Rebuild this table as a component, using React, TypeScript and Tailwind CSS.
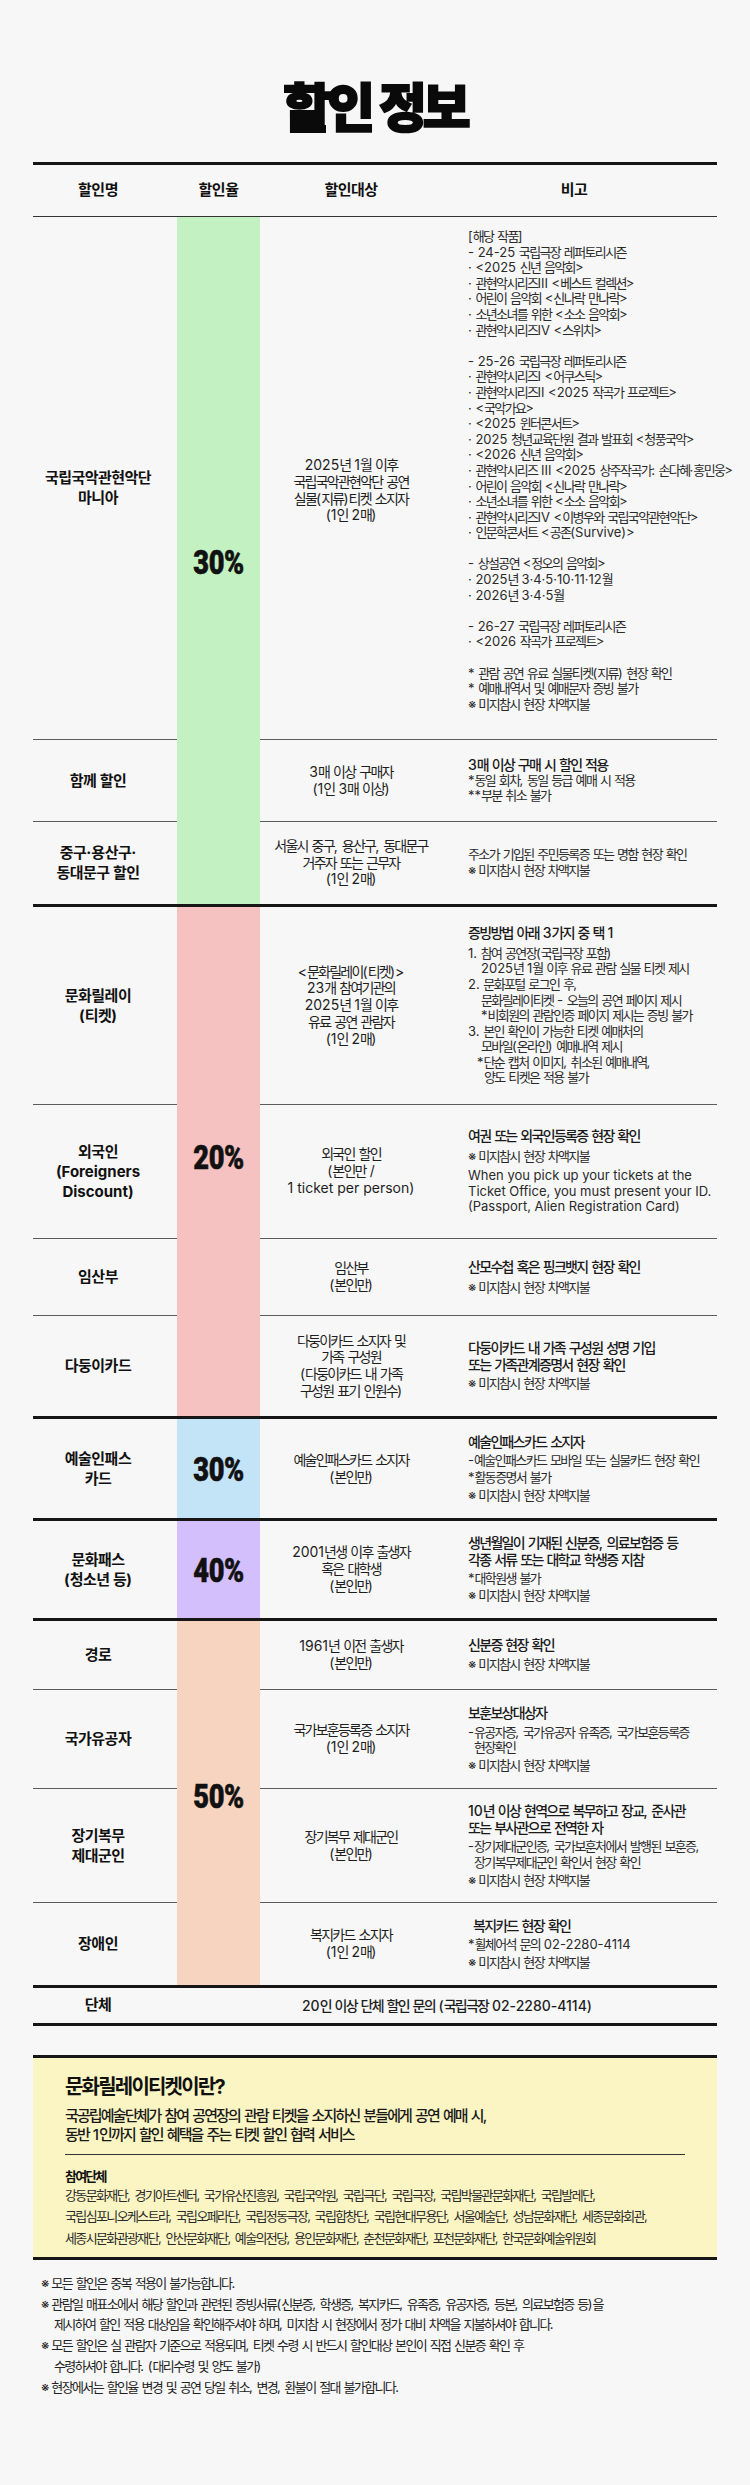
import React from "react";

const RX = /([\u1100-\u11FF\u3130-\u318F\uAC00-\uD7A3※]+)/;

function K({ s }: { s: string }) {
  const parts = s.split(RX);
  return (
    <span>
      {parts.map((p, i) =>
        p === "" ? null : i % 2 === 1 ? (
          <React.Fragment key={i}>{p}</React.Fragment>
        ) : (
          <span key={i} className="tracking-normal">
            {p}
          </span>
        )
      )}
    </span>
  );
}

type Row = {
  h: string;
  name: string[];
  nameCls?: string;
  target: string[];
  targetCls?: string;
  note: React.ReactNode;
  noteCls?: string;
};

type Group = {
  color: string;
  rate: string;
  span: string;
  rateCls?: string;
  rows: Row[];
  first?: boolean;
};

const Hd = ({ s, className = "" }: { s: string; className?: string }) => (
  <div
    className={`text-[14px] leading-[16.8px] font-medium tracking-[-0.12em] text-[#1a1a1a] whitespace-nowrap ${className}`}
  >
    <K s={s} />
  </div>
);

const Nt = ({ s, className = "" }: { s: string; className?: string }) => (
  <div className={`text-[13px] leading-[15.6px] tracking-[-0.125em] text-[#2a2a2a] whitespace-nowrap ${className}`}>
    {s === "" ? "\u00a0" : <K s={s} />}
  </div>
);

const MIJI = "※ 미지참시 현장 차액지불";

const row1Lines = [
  "[해당 작품]",
  "- 24-25 국립극장 레퍼토리시즌",
  "· <2025 신년 음악회>",
  "· 관현악시리즈III <베스트 컬렉션>",
  "· 어린이 음악회 <신나락 만나락>",
  "· 소년소녀를 위한 <소소 음악회>",
  "· 관현악시리즈IV <스위치>",
  "",
  "- 25-26 국립극장 레퍼토리시즌",
  "· 관현악시리즈I <어쿠스틱>",
  "· 관현악시리즈II <2025 작곡가 프로젝트>",
  "· <국악가요>",
  "· <2025 윈터콘서트>",
  "· 2025 청년교육단원 결과 발표회 <청풍국악>",
  "· <2026 신년 음악회>",
  "· 관현악시리즈 III <2025 상주작곡가: 손다혜·홍민웅>",
  "· 어린이 음악회 <신나락 만나락>",
  "· 소년소녀를 위한 <소소 음악회>",
  "· 관현악시리즈IV <이병우와 국립국악관현악단>",
  "· 인문학콘서트 <공존(Survive)>",
  "",
  "- 상설공연 <정오의 음악회>",
  "· 2025년 3·4·5·10·11·12월",
  "· 2026년 3·4·5월",
  "",
  "- 26-27 국립극장 레퍼토리시즌",
  "· <2026 작곡가 프로젝트>",
  "",
  "* 관람 공연 유료 실물티켓(지류) 현장 확인",
  "* 예매내역서 및 예매문자 증빙 불가",
  MIJI,
];

const groups: Group[] = [
  {
    first: true,
    color: "bg-[#c3f1c2]",
    rate: "30%",
    span: "row-span-3",
    rateCls: "pt-[3px]",
    rows: [
      {
        h: "h-[522px]",
        name: ["국립국악관현악단", "마니아"],
        nameCls: "pt-[20px]",
        target: ["2025년 1월 이후", "국립국악관현악단 공연", "실물(지류)티켓 소지자", "(1인 2매)"],
        targetCls: "pt-[25px]",
        noteCls: "justify-start pt-[12px]",
        note: (
          <>
            {row1Lines.map((l, i) => (
              <Nt key={i} s={l} />
            ))}
          </>
        ),
      },
      {
        h: "h-[82px]",
        name: ["함께 할인"],
        target: ["3매 이상 구매자", "(1인 3매 이상)"],
        note: (
          <>
            <Hd className="mb-[-1px]" s="3매 이상 구매 시 할인 적용" />
            <Nt s="*동일 회차, 동일 등급 예매 시 적용" />
            <Nt s="**부분 취소 불가" />
          </>
        ),
      },
      {
        h: "h-[83px]",
        name: ["중구·용산구·", "동대문구 할인"],
        target: ["서울시 중구, 용산구, 동대문구", "거주자 또는 근무자", "(1인 2매)"],
        note: (
          <>
            <Nt s="주소가 기입된 주민등록증 또는 명함 현장 확인" />
            <Nt s={MIJI} />
          </>
        ),
      },
    ],
  },
  {
    color: "bg-[#f6c1c1]",
    rate: "20%",
    span: "row-span-4",
    rateCls: "pb-[9px]",
    rows: [
      {
        h: "h-[197px]",
        name: ["문화릴레이", "(티켓)"],
        target: ["<문화릴레이(티켓)>", "23개 참여기관의", "2025년 1월 이후", "유료 공연 관람자", "(1인 2매)"],
        note: (
          <>
            <Hd className="mb-[4px]" s="증빙방법 아래 3가지 중 택 1" />
            <Nt s="1. 참여 공연장(국립극장 포함)" />
            <Nt className="pl-[13px]" s="2025년 1월 이후 유료 관람 실물 티켓 제시" />
            <Nt s="2. 문화포털 로그인 후," />
            <Nt className="pl-[13px]" s="문화릴레이티켓 - 오늘의 공연 페이지 제시" />
            <Nt className="pl-[13px]" s="*비회원의 관람인증 페이지 제시는 증빙 불가" />
            <Nt s="3. 본인 확인이 가능한 티켓 예매처의" />
            <Nt className="pl-[13px]" s="모바일(온라인) 예매내역 제시" />
            <Nt className="pl-[9px]" s="*단순 캡처 이미지, 취소된 예매내역," />
            <Nt className="pl-[16px]" s="양도 티켓은 적용 불가" />
          </>
        ),
      },
      {
        h: "h-[134px]",
        name: ["외국인", "(Foreigners", "Discount)"],
        target: ["외국인 할인", "(본인만 /", "1 ticket per person)"],
        note: (
          <>
            <Hd s="여권 또는 외국인등록증 현장 확인" />
            <Nt className="mt-[4px]" s={MIJI} />
            <Nt className="mt-[4px]" s="When you pick up your tickets at the" />
            <Nt s="Ticket Office, you must present your ID." />
            <Nt s="(Passport, Alien Registration Card)" />
          </>
        ),
      },
      {
        h: "h-[77px]",
        name: ["임산부"],
        target: ["임산부", "(본인만)"],
        note: (
          <>
            <Hd s="산모수첩 혹은 핑크뱃지 현장 확인" />
            <Nt className="mt-[4px]" s={MIJI} />
          </>
        ),
      },
      {
        h: "h-[101px]",
        name: ["다둥이카드"],
        target: ["다둥이카드 소지자 및", "가족 구성원", "(다둥이카드 내 가족", "구성원 표기 인원수)"],
        note: (
          <>
            <Hd s="다둥이카드 내 가족 구성원 성명 기입" />
            <Hd s="또는 가족관계증명서 현장 확인" />
            <Nt className="mt-[2px]" s={MIJI} />
          </>
        ),
      },
    ],
  },
  {
    color: "bg-[#c3e3f7]",
    rate: "30%",
    span: "row-span-1",
    rows: [
      {
        h: "h-[99px]",
        name: ["예술인패스", "카드"],
        target: ["예술인패스카드 소지자", "(본인만)"],
        note: (
          <>
            <Hd s="예술인패스카드 소지자" />
            <Nt className="mt-[2px]" s="-예술인패스카드 모바일 또는 실물카드 현장 확인" />
            <Nt className="mt-[2px]" s="*활동증명서 불가" />
            <Nt className="mt-[2px]" s={MIJI} />
          </>
        ),
      },
    ],
  },
  {
    color: "bg-[#d2bffc]",
    rate: "40%",
    span: "row-span-1",
    rows: [
      {
        h: "h-[97px]",
        name: ["문화패스", "(청소년 등)"],
        target: ["2001년생 이후 출생자", "혹은 대학생", "(본인만)"],
        note: (
          <>
            <Hd s="생년월일이 기재된 신분증, 의료보험증 등" />
            <Hd s="각종 서류 또는 대학교 학생증 지참" />
            <Nt className="mt-[2px]" s="*대학원생 불가" />
            <Nt className="mt-[2px]" s={MIJI} />
          </>
        ),
      },
    ],
  },
  {
    color: "bg-[#f7d4c0]",
    rate: "50%",
    span: "row-span-4",
    rateCls: "pb-[14px]",
    rows: [
      {
        h: "h-[68px]",
        name: ["경로"],
        target: ["1961년 이전 출생자", "(본인만)"],
        note: (
          <>
            <Hd s="신분증 현장 확인" />
            <Nt className="mt-[3px]" s={MIJI} />
          </>
        ),
      },
      {
        h: "h-[99px]",
        name: ["국가유공자"],
        target: ["국가보훈등록증 소지자", "(1인 2매)"],
        note: (
          <>
            <Hd s="보훈보상대상자" />
            <Nt className="mt-[3px]" s="-유공자증, 국가유공자 유족증, 국가보훈등록증" />
            <Nt className="pl-[6px]" s="현장확인" />
            <Nt className="mt-[2px]" s={MIJI} />
          </>
        ),
      },
      {
        h: "h-[114px]",
        name: ["장기복무", "제대군인"],
        target: ["장기복무 제대군인", "(본인만)"],
        note: (
          <>
            <Hd s="10년 이상 현역으로 복무하고 장교, 준사관" />
            <Hd s="또는 부사관으로 전역한 자" />
            <Nt className="mt-[3px]" s="-장기제대군인증, 국가보훈처에서 발행된 보훈증," />
            <Nt className="pl-[6px]" s="장기복무제대군인 확인서 현장 확인" />
            <Nt className="mt-[2px]" s={MIJI} />
          </>
        ),
      },
      {
        h: "h-[83px]",
        name: ["장애인"],
        target: ["복지카드 소지자", "(1인 2매)"],
        note: (
          <>
            <Hd className="pl-[5px]" s="복지카드 현장 확인" />
            <Nt className="mt-[3px]" s="*휠체어석 문의 02-2280-4114" />
            <Nt className="mt-[2px]" s={MIJI} />
          </>
        ),
      },
    ],
  },
];

const GRID = "grid grid-cols-[144px_83px_182px_275px]";
const SEP = "border-t border-[#5c5c5c]";
const HEAD = "text-[15px] font-bold tracking-[-0.035em] text-[#111]";

function Rate({ v }: { v: string }) {
  return (
    <div className="scale-x-[0.8] font-['Roboto',sans-serif] font-black text-[34px] leading-none tracking-[-0.5px] text-[#111] [-webkit-text-stroke:0.6px_#111]">
      {v}
    </div>
  );
}

function GroupView({ g }: { g: Group }) {
  return (
    <div className={`${GRID} ${g.first ? "" : "border-t-[3px] border-[#161616]"}`}>
      <div
        className={`row-start-1 col-start-2 ${g.span} ${g.color} ${g.rateCls ?? ""} flex items-center justify-center`}
      >
        <Rate v={g.rate} />
      </div>
      {g.rows.map((r, i) => {
        const b = i > 0 ? SEP : "";
        return (
          <React.Fragment key={i}>
            <div className={`col-start-1 ${r.h} ${b} ${r.nameCls ?? ""} flex items-center justify-center pr-[14px]`}>
              <div className={`${HEAD} leading-[20px] text-center`}>
                {r.name.map((l, j) => (
                  <div key={j} className="whitespace-nowrap">
                    <K s={l} />
                  </div>
                ))}
              </div>
            </div>
            <div className={`col-start-3 ${b} ${r.targetCls ?? ""} flex items-center justify-center`}>
              <div className="text-[14px] leading-[16.7px] tracking-[-0.125em] text-[#1e1e1e] text-center">
                {r.target.map((l, j) => (
                  <div key={j} className="whitespace-nowrap">
                    <K s={l} />
                  </div>
                ))}
              </div>
            </div>
            <div className={`col-start-4 ${b} flex flex-col pl-[26px] ${r.noteCls ?? "justify-center"}`}>
              {r.note}
            </div>
          </React.Fragment>
        );
      })}
    </div>
  );
}

const footLines: { s: string; indent?: boolean }[] = [
  { s: "※ 모든 할인은 중복 적용이 불가능합니다." },
  { s: "※ 관람일 매표소에서 해당 할인과 관련된 증빙서류(신분증, 학생증, 복지카드, 유족증, 유공자증, 등본, 의료보험증 등)을" },
  { s: "제시하여 할인 적용 대상임을 확인해주셔야 하며, 미지참 시 현장에서 정가 대비 차액을 지불하셔야 합니다.", indent: true },
  { s: "※ 모든 할인은 실 관람자 기준으로 적용되며, 티켓 수령 시 반드시 할인대상 본인이 직접 신분증 확인 후" },
  { s: "수령하셔야 합니다. (대리수령 및 양도 불가)", indent: true },
  { s: "※ 현장에서는 할인율 변경 및 공연 당일 취소, 변경, 환불이 절대 불가합니다." },
];

const orgLines = [
  "강동문화재단, 경기아트센터, 국가유산진흥원, 국립국악원, 국립극단, 국립극장, 국립박물관문화재단, 국립발레단,",
  "국립심포니오케스트라, 국립오페라단, 국립정동극장, 국립합창단, 국립현대무용단, 서울예술단, 성남문화재단, 세종문화회관,",
  "세종시문화관광재단, 안산문화재단, 예술의전당, 용인문화재단, 춘천문화재단, 포천문화재단, 한국문화예술위원회",
];

export default function App() {
  return (
    <div className="min-h-[2485px] w-full bg-[#f7f7f7] font-['Inter','Noto_Sans_CJK_KR',sans-serif] text-[#1a1a1a]">
      <div className="px-[33px] pt-[75px]">
        <h1 className="text-center font-['Noto_Sans_CJK_KR',sans-serif] text-[52px] leading-[60px] font-black tracking-[-4px] text-[#0a0a0a] [-webkit-text-stroke:2px_#0a0a0a]">
          할인 정보
        </h1>

        <div className="mt-[27px]">
          <div className={`${GRID} h-[55px] border-t-[3px] border-b border-t-[#161616] border-b-[#333]`}>
            <div className={`flex items-center justify-center pr-[14px] ${HEAD}`}>할인명</div>
            <div className={`flex items-center justify-center ${HEAD}`}>할인율</div>
            <div className={`flex items-center justify-center ${HEAD}`}>할인대상</div>
            <div className={`flex items-center justify-center pr-[11px] ${HEAD}`}>비고</div>
          </div>

          {groups.map((g, i) => (
            <GroupView key={i} g={g} />
          ))}

          <div className="grid grid-cols-[144px_540px] h-[41px] border-y-[3px] border-[#161616]">
            <div className={`flex items-center justify-center pr-[14px] ${HEAD}`}>단체</div>
            <div className="flex items-center justify-center text-[14px] font-medium tracking-[-0.125em] text-[#1e1e1e] whitespace-nowrap">
              <K s="20인 이상 단체 할인 문의 (국립극장 02-2280-4114)" />
            </div>
          </div>
        </div>

        <div className="mt-[29px] border-y-[3px] border-[#161616] bg-[#fbf5c3] px-[32px] pt-[16px] pb-[8px]">
          <div className="text-[20px] leading-[26px] font-bold tracking-[-0.09em] text-[#111] whitespace-nowrap">
            <K s="문화릴레이티켓이란?" />
          </div>
          <div className="mt-[6px] text-[15px] leading-[19px] font-medium tracking-[-0.125em] text-[#1a1a1a]">
            <div className="whitespace-nowrap">
              <K s="국공립예술단체가 참여 공연장의 관람 티켓을 소지하신 분들에게 공연 예매 시," />
            </div>
            <div className="whitespace-nowrap">
              <K s="동반 1인까지 할인 혜택을 주는 티켓 할인 협력 서비스" />
            </div>
          </div>
          <div className="mt-[10px] border-t border-[#333]" />
          <div className="mt-[12px] text-[13px] leading-[18px] font-bold tracking-[-0.14em] text-[#111]">
            참여단체
          </div>
          <div className="text-[13px] leading-[21.3px] tracking-[-0.125em] text-[#2a2a2a]">
            {orgLines.map((l, i) => (
              <div key={i} className="whitespace-nowrap">
                <K s={l} />
              </div>
            ))}
          </div>
        </div>

        <div className="mt-[13px] pl-[8px] text-[13px] leading-[20.8px] tracking-[-0.125em] text-[#222]">
          {footLines.map((l, i) => (
            <div key={i} className={`whitespace-nowrap ${l.indent ? "pl-[13px]" : ""}`}>
              <K s={l.s} />
            </div>
          ))}
        </div>
      </div>
    </div>
  );
}
